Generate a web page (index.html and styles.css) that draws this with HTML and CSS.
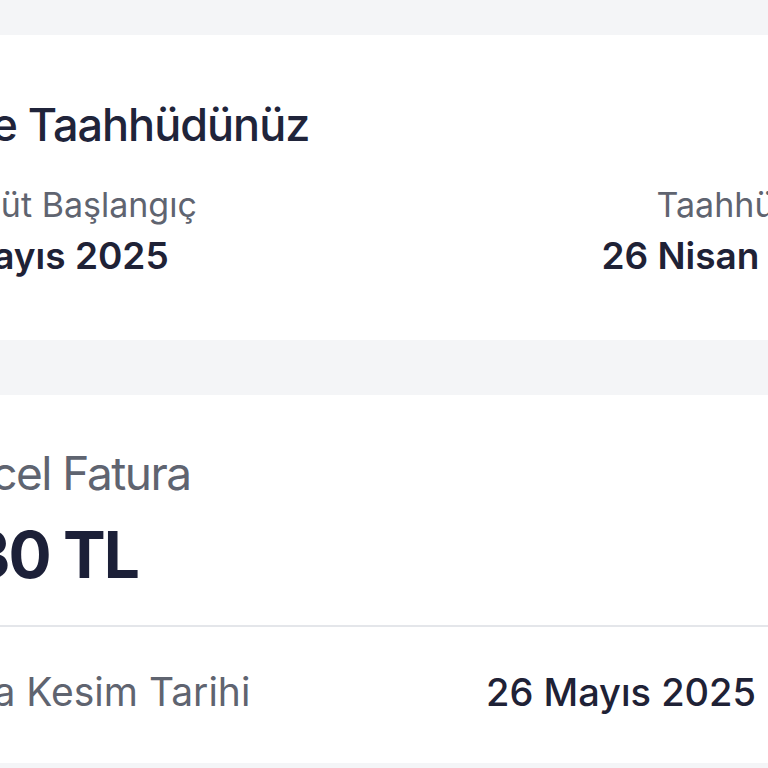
FILE: index.html
```html
<!DOCTYPE html>
<html lang="tr">
<head>
  <meta charset="UTF-8" />
  <title>Hattım</title>
  <link rel="stylesheet" href="styles.css">
</head>
<body>
  <div class="screen">
    <!-- taahhüt kartı -->
    <section class="card commitment">
      <h2 class="card-title">Hat ve Taahhüdünüz</h2>
      <div class="dates">
        <div class="date-col start">
          <span class="label">Taahhüt Başlangıç</span>
          <span class="value">26 Mayıs 2025</span>
        </div>
        <div class="date-col end">
          <span class="label">Taahhüt Bitiş</span>
          <span class="value">26 Nisan 2026</span>
        </div>
      </div>
    </section>

    <!-- fatura kartı -->
    <section class="card invoice">
      <div class="invoice-top">
        <span class="invoice-label">Güncel Fatura</span>
        <span class="amount">1.230 TL</span>
      </div>
      <div class="invoice-row">
        <span class="row-label">Fatura Kesim Tarihi</span>
        <span class="row-value">
          26 Mayıs 2025
          <svg class="info" viewBox="0 0 24 24" width="28" height="28">
            <circle cx="12" cy="12" r="10" fill="none" stroke="#d3d6dc" stroke-width="1.6"/>
            <path d="M12 11v6M12 7.5v.5" stroke="#d3d6dc" stroke-width="1.8" stroke-linecap="round"/>
          </svg>
        </span>
      </div>
    </section>
  </div>
</body>
</html>
```

FILE: styles.css
```css
html, body {
  margin: 0;
  padding: 0;
}

body {
  background-color: #f4f5f7;
  font-family: Inter, "Noto Sans", sans-serif;
  color: #1f2236;
  overflow: hidden;
  height: 768px;
}

/* ekran yakınlaştırılmış, kenarlar taşıyor */
.screen {
  width: 1162px;
  margin-left: -207px;
  padding-top: 35px;
  display: flex;
  flex-direction: column;
  gap: 55px;
}

.card {
  background-color: #fff;
}

.commitment {
  padding: 60px 92px 61px;
}

.card-title {
  margin: 0;
  font-size: 45px;
  line-height: 60px;
  font-weight: 500;
  letter-spacing: -1px;
  color: #20243a;
}

.dates {
  display: flex;
  justify-content: space-between;
  margin-top: 30px;
}

.date-col {
  display: flex;
  flex-direction: column;
  gap: 8px;
}

.date-col.start {
  margin-left: 18px;
}

.date-col.end {
  align-items: flex-end;
}

.label {
  font-size: 34px;
  line-height: 40px;
  color: #5f6470;
}

.value {
  font-size: 37px;
  line-height: 46px;
  font-weight: 600;
  color: #1f2236;
}

.invoice-top {
  display: flex;
  flex-direction: column;
  align-items: flex-start;
  gap: 16px;
  padding: 50px 92px 32px;
  border-bottom: 2px solid #e4e6ea;
}

.invoice-label {
  margin-left: 22px;
  font-size: 46px;
  line-height: 56px;
  letter-spacing: -1.5px;
  color: #5f6470;
}

.amount {
  margin-left: 1px;
  font-size: 64px;
  line-height: 76px;
  font-weight: 700;
  letter-spacing: -2px;
  color: #1c2038;
}

.invoice-row {
  display: flex;
  justify-content: space-between;
  align-items: center;
  padding: 40px 160px 46px 92px;
}

.row-label {
  margin-left: 14px;
  font-size: 39px;
  line-height: 50px;
  color: #5f6470;
}

.row-value {
  display: flex;
  align-items: center;
  gap: 11px;
  font-size: 38px;
  line-height: 50px;
  font-weight: 500;
  color: #1f2236;
}
```
